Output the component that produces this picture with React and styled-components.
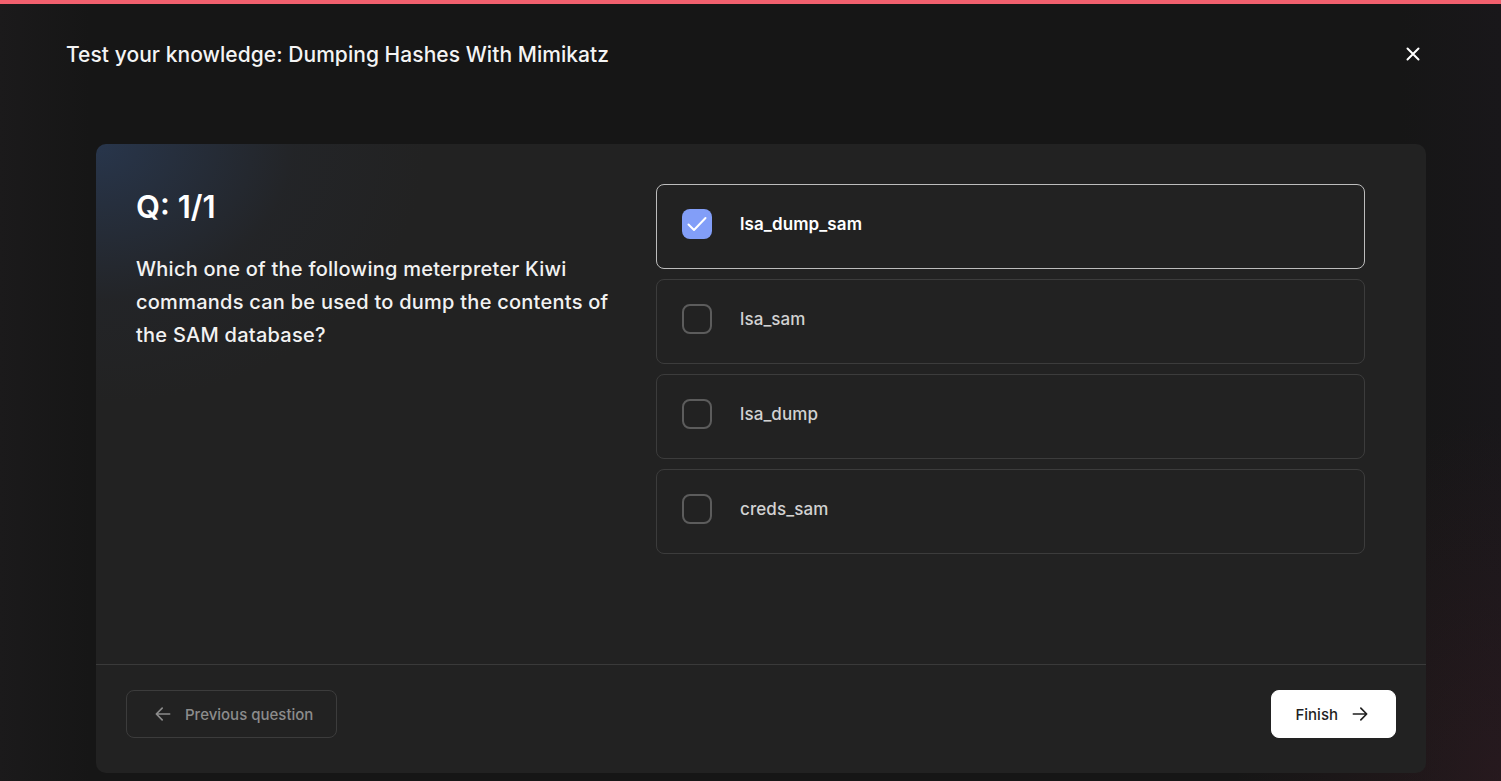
import React, { useState } from 'react';
import styled, { createGlobalStyle } from 'styled-components';

const GlobalStyle = createGlobalStyle`
  * { box-sizing: border-box; }
  html, body {
    margin: 0;
    padding: 0;
    background: #161616;
  }
  body {
    font-family: Inter, "Noto Sans", "Liberation Sans", sans-serif;
    -webkit-font-smoothing: antialiased;
  }
`;

const Page = styled.div`
  width: 1501px;
  height: 781px;
  overflow: hidden;
  display: flex;
  flex-direction: column;
  border-top: 4px solid #f2606e;
  background:
    radial-gradient(ellipse 380px 520px at 100% 100%, rgba(70, 30, 40, 0.3), transparent 70%),
    linear-gradient(90deg, #1b1a1b 0px, #161616 90px, #161616 1400px, #19171a 100%);
`;

const Header = styled.header`
  display: flex;
  align-items: center;
  justify-content: space-between;
  height: 100px;
  padding: 0 76px 0 66px;
`;

const Title = styled.h1`
  margin: 0;
  color: #f4f4f4;
  font-size: 21px;
  font-weight: 500;
  letter-spacing: 0.05px;
`;

const CloseButton = styled.button`
  display: flex;
  align-items: center;
  justify-content: center;
  width: 24px;
  height: 24px;
  padding: 0;
  border: none;
  background: transparent;
  color: #ffffff;
  cursor: pointer;
`;

const Main = styled.main`
  flex: 1;
  padding: 40px 75px 8px 96px;
  display: flex;
`;

const Card = styled.section`
  flex: 1;
  display: flex;
  flex-direction: column;
  border-radius: 10px;
  background:
    radial-gradient(ellipse 330px 260px at 0% 0%, rgba(45, 70, 110, 0.55), rgba(40, 50, 70, 0.15) 60%, transparent 100%),
    #222222;
`;

const Body = styled.div`
  flex: 1;
  display: grid;
  grid-template-columns: 480px 709px;
  column-gap: 40px;
  padding: 40px 60px 0 40px;
`;

const QuestionCol = styled.div`
  display: flex;
  flex-direction: column;
`;

const Counter = styled.h2`
  margin: 3px 0 0;
  color: #ffffff;
  font-size: 31px;
  font-weight: 600;
  line-height: 40px;
`;

const QuestionText = styled.p`
  margin: 26px 0 0;
  color: #f2f2f2;
  font-size: 20px;
  font-weight: 500;
  letter-spacing: 0.25px;
  line-height: 33px;
`;

const Options = styled.div`
  display: flex;
  flex-direction: column;
  gap: 10px;
`;

const Option = styled.label`
  display: flex;
  align-items: center;
  gap: 28px;
  height: 85px;
  padding: 0 25px 5px;
  border-radius: 8px;
  border: 1px solid ${p => (p.$selected ? '#bdbdbd' : '#3c3c3c')};
  cursor: pointer;
`;

const Box = styled.span`
  display: flex;
  width: 30px;
  height: 30px;
  border-radius: 8px;
  background: ${p => (p.$checked ? '#829ef8' : 'transparent')};
  border: ${p => (p.$checked ? 'none' : '2.5px solid #5c5c5c')};
  flex-shrink: 0;
`;

const OptionLabel = styled.span`
  color: ${p => (p.$selected ? '#ffffff' : '#d2d2d2')};
  font-size: 17px;
  font-weight: ${p => (p.$selected ? 600 : 500)};
  letter-spacing: 0.1px;
`;

const Footer = styled.footer`
  display: flex;
  align-items: center;
  justify-content: space-between;
  height: 109px;
  padding: 0 30px 10px;
  border-top: 1px solid #3a3a3a;
`;

const NavButton = styled.button`
  display: flex;
  align-items: center;
  gap: 12px;
  height: 48px;
  padding: ${p => (p.$primary ? '0 25px 0 23px' : '0 23px 0 26px')};
  border-radius: 8px;
  border: 1px solid ${p => (p.$primary ? '#ffffff' : '#3c3c3c')};
  background: ${p => (p.$primary ? '#ffffff' : 'transparent')};
  color: ${p => (p.$primary ? '#1f1f1f' : '#8c8c8c')};
  font-family: inherit;
  font-size: 15px;
  font-weight: 500;
  cursor: pointer;
`;

const ArrowIcon = ({ dir = 'right' }) => (
  <svg width="20" height="20" viewBox="0 0 24 24" fill="none" stroke="currentColor"
    strokeWidth="2" strokeLinecap="round" strokeLinejoin="round">
    {dir === 'right' ? (
      <path d="M4 12h16M13 5l7 7-7 7" />
    ) : (
      <path d="M20 12H4M11 5l-7 7 7 7" />
    )}
  </svg>
);

const answers = ['lsa_dump_sam', 'lsa_sam', 'lsa_dump', 'creds_sam'];

export default function App() {
  const [picked, setPicked] = useState(0);

  return (
    <>
      <GlobalStyle />
      <Page>
        <Header>
          <Title>Test your knowledge: Dumping Hashes With Mimikatz</Title>
          <CloseButton aria-label="Close">
            <svg width="16" height="16" viewBox="0 0 16 16" fill="none" stroke="currentColor"
              strokeWidth="2" strokeLinecap="round">
              <path d="M2.5 2.5l11 11M13.5 2.5l-11 11" />
            </svg>
          </CloseButton>
        </Header>
        <Main>
          <Card>
            <Body>
              <QuestionCol>
                <Counter>Q: 1/1</Counter>
                <QuestionText>
                  Which one of the following meterpreter Kiwi commands can be used to dump the contents of the SAM database?
                </QuestionText>
              </QuestionCol>
              <Options>
                {answers.map((a, i) => (
                  <Option key={a} $selected={picked === i} onClick={() => setPicked(i)}>
                    <Box $checked={picked === i}>
                      {picked === i && (
                        <svg width="30" height="30" viewBox="0 0 30 30" fill="none" stroke="#ffffff"
                          strokeWidth="2" strokeLinecap="round" strokeLinejoin="round">
                          <path d="M6.5 15.5l5.5 5.5 11.5-12" />
                        </svg>
                      )}
                    </Box>
                    <OptionLabel $selected={picked === i}>{a}</OptionLabel>
                  </Option>
                ))}
              </Options>
            </Body>
            <Footer>
              <NavButton>
                <ArrowIcon dir="left" />
                Previous question
              </NavButton>
              <NavButton $primary>
                Finish
                <ArrowIcon dir="right" />
              </NavButton>
            </Footer>
          </Card>
        </Main>
      </Page>
    </>
  );
}
